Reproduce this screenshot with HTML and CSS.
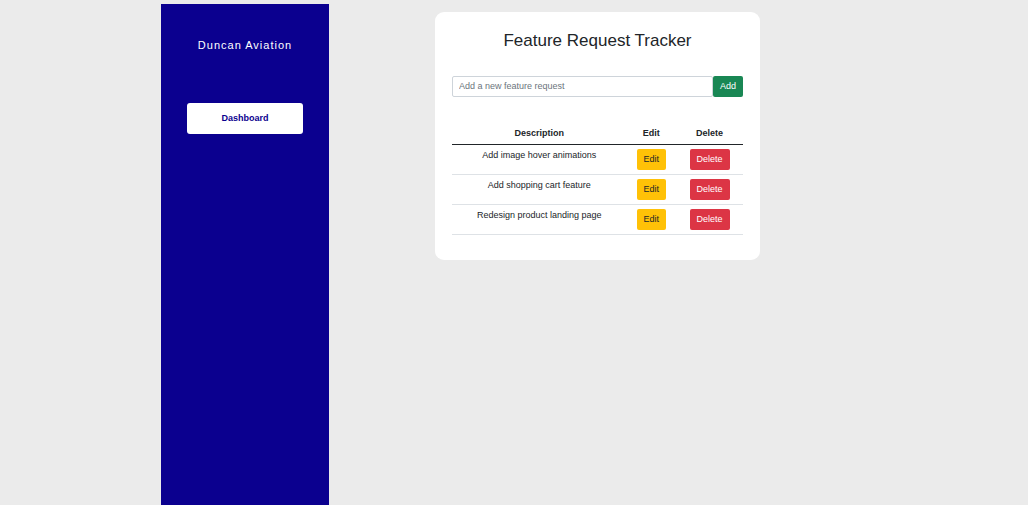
FILE: index.html
```html
<!DOCTYPE html>
<html lang="en">
<head>
<meta charset="utf-8">
<meta name="viewport" content="width=device-width, initial-scale=1">
<title>Feature Request Tracker</title>
<link rel="stylesheet" href="styles.css">
</head>
<body>
<div class="layout">
  <aside class="sidebar">
    <p class="brand">Duncan Aviation</p>
    <nav><a class="nav-link" href="#dashboard">Dashboard</a></nav>
  </aside>
  <main class="content" id="dashboard">
    <section class="card">
      <h1 class="title">Feature Request Tracker</h1>
      <form class="add-form">
        <input class="field" type="text" placeholder="Add a new feature request" aria-label="New feature request">
        <button class="btn btn-add" type="button">Add</button>
      </form>
      <table class="requests">
        <thead>
          <tr><th class="col-description">Description</th><th class="col-edit">Edit</th><th class="col-delete">Delete</th></tr>
        </thead>
        <tbody>
          <tr>
            <td>Add image hover animations</td>
            <td><button class="btn btn-edit" type="button">Edit</button></td>
            <td><button class="btn btn-delete" type="button">Delete</button></td>
          </tr>
          <tr>
            <td>Add shopping cart feature</td>
            <td><button class="btn btn-edit" type="button">Edit</button></td>
            <td><button class="btn btn-delete" type="button">Delete</button></td>
          </tr>
          <tr>
            <td>Redesign product landing page</td>
            <td><button class="btn btn-edit" type="button">Edit</button></td>
            <td><button class="btn btn-delete" type="button">Delete</button></td>
          </tr>
        </tbody>
      </table>
    </section>
  </main>
</div>
</body>
</html>
```
FILE: styles.css
```css
* {
  box-sizing: border-box;
}

body {
  margin: 0;
  background: #ebebeb;
  color: #212529;
  font: 9px/13px "Liberation Sans", Arial, sans-serif;
}

.layout {
  display: flex;
  max-width: 706px;
  min-height: 100vh;
  margin: 0 auto;
  padding-top: 4px;
}

.sidebar {
  flex: 0 0 168px;
  padding: 33px 26px;
  background: #0b008f;
  text-align: center;
}

.brand {
  margin: 0 0 50px;
  color: #fff;
  font-size: 11px;
  line-height: 16px;
  letter-spacing: 1px;
  white-space: nowrap;
}

.nav-link {
  display: block;
  padding: 9px;
  border-radius: 3px;
  background: #fff;
  color: #0b008f;
  font-weight: bold;
  text-decoration: none;
}

.content {
  flex: 1;
  display: flex;
  justify-content: center;
  align-items: flex-start;
  padding: 8px 9px 8px 8px;
}

.card {
  flex: 0 1 325px;
  padding: 18px 17px 25px;
  border-radius: 9px;
  background: #fff;
}

.title {
  margin: 0 0 25px;
  font-size: 17px;
  font-weight: normal;
  line-height: 21px;
  text-align: center;
}

.add-form {
  display: flex;
  margin-bottom: 26px;
}

.field {
  flex: 1;
  min-width: 0;
  padding: 3px 6px;
  border: 1px solid #ced4da;
  border-radius: 2px;
  background: #fff;
  color: inherit;
  font: inherit;
}

.field::placeholder {
  color: #6c757d;
  opacity: 1;
}

.btn {
  padding: 4px 7px;
  border: 0;
  border-radius: 2px;
  font: inherit;
  cursor: pointer;
}

.btn-add {
  background: #198754;
  color: #fff;
}

.btn-edit {
  background: #ffc107;
  color: #212529;
}

.btn-delete {
  background: #dc3545;
  color: #fff;
}

.requests {
  width: 100%;
  border-collapse: collapse;
  table-layout: fixed;
  text-align: center;
}

.requests th,
.requests td {
  padding: 4px;
  border-bottom: 1px solid #dee2e6;
  vertical-align: top;
}

.requests th {
  border-bottom-color: #212529;
}

.requests .btn {
  display: block;
  margin: 0 auto;
}

.col-description {
  width: 60%;
}

.col-edit {
  width: 17%;
}

.col-delete {
  width: 23%;
}
```
